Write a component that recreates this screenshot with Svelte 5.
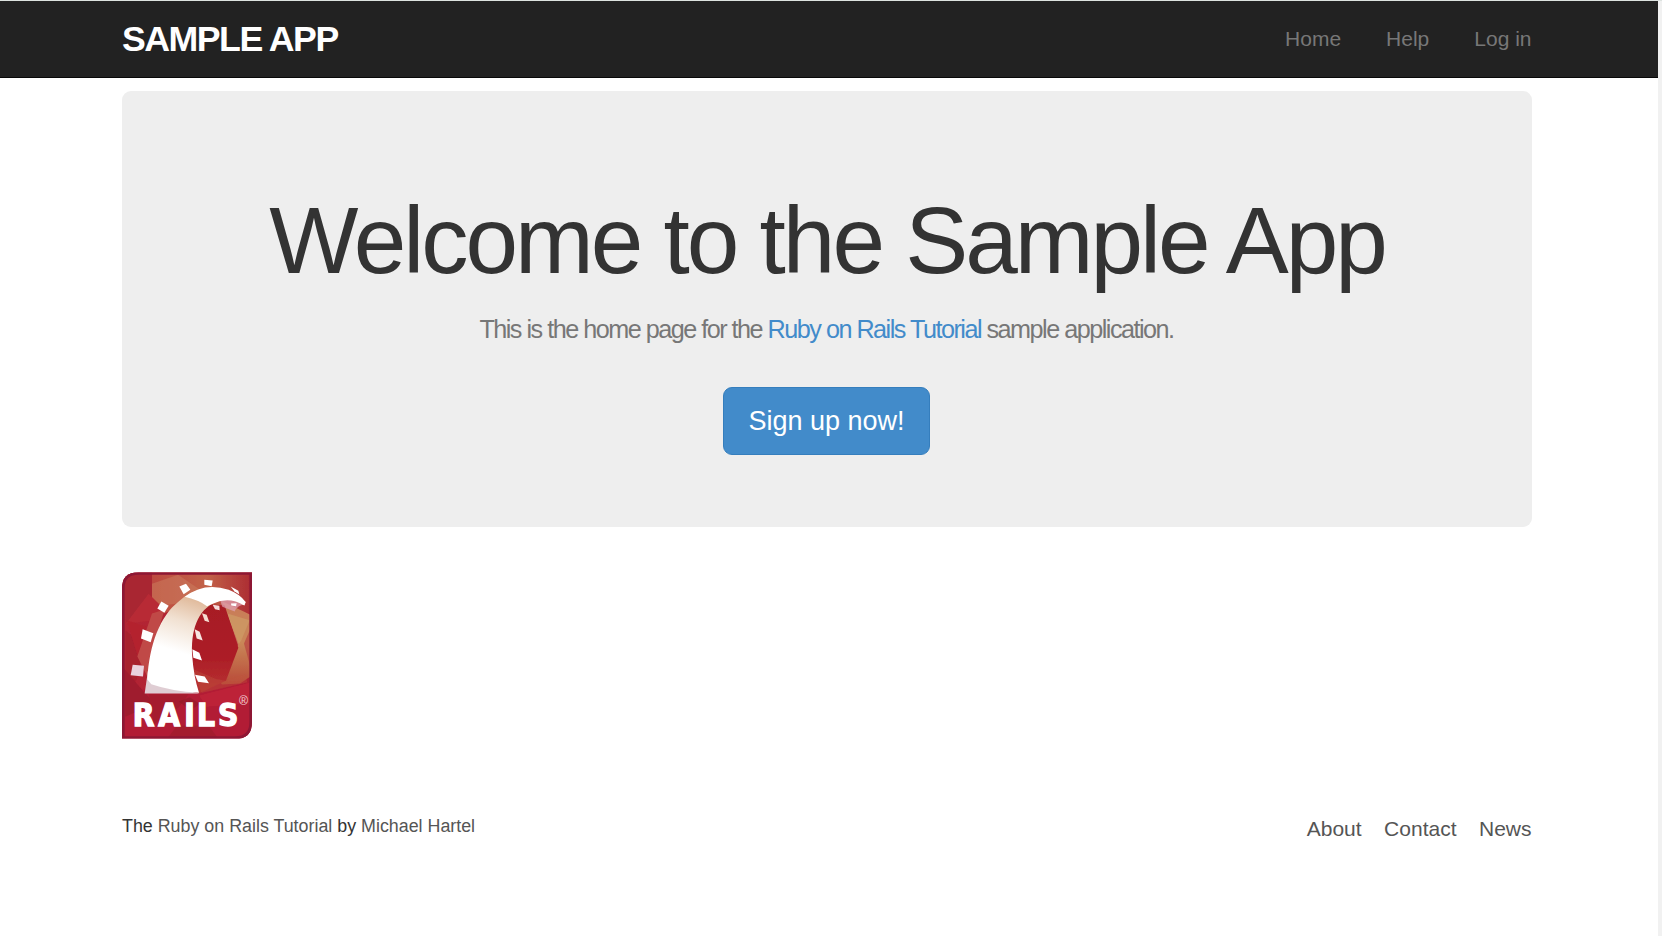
<script>
  const navLinks = ['Home', 'Help', 'Log in'];
  const footerLinks = ['About', 'Contact', 'News'];
</script>

<div class="window">
  <div class="page">
    <header>
      <div class="container bar">
        <a class="brand" href="#home">sample app</a>
        <nav class="top">
          {#each navLinks as label}<a href="#nav">{label}</a>{/each}
        </nav>
      </div>
    </header>

    <main class="container">
      <section class="hero">
        <h1>Welcome to the Sample App</h1>
        <p>This is the home page for the <a href="#tutorial">Ruby on Rails Tutorial</a> sample application.</p>
        <a class="button" href="#signup">Sign up now!</a>
      </section>

      <svg class="logo" viewBox="30 30 390 500" role="img" aria-label="Rails logo">
        <defs>
          <linearGradient id="base" x1="0" y1="0" x2="1" y2="1">
            <stop offset="0" stop-color="#b32634" />
            <stop offset="1" stop-color="#b01f33" />
          </linearGradient>
          <linearGradient id="track" gradientUnits="userSpaceOnUse" x1="235" y1="105" x2="185" y2="265">
            <stop offset="0" stop-color="#e0b99a" />
            <stop offset=".45" stop-color="#f1e1d2" />
            <stop offset="1" stop-color="#fff" />
          </linearGradient>
          <linearGradient id="gold" x1="0" y1="0" x2="0" y2="1">
            <stop offset="0" stop-color="#c97a58" />
            <stop offset=".5" stop-color="#c98758" />
            <stop offset="1" stop-color="#b94a38" />
          </linearGradient>
          <linearGradient id="glow" x1="0" y1="0" x2="1" y2="0">
            <stop offset="0" stop-color="#bd4a40" />
            <stop offset=".55" stop-color="#c26248" />
            <stop offset="1" stop-color="#ac2b32" />
          </linearGradient>
          <linearGradient id="core" x1="0" y1="0" x2="0" y2="1">
            <stop offset="0" stop-color="#a71a24" />
            <stop offset=".6" stop-color="#ac1d27" />
            <stop offset="1" stop-color="#b93432" />
          </linearGradient>
          <filter id="soft"><feGaussianBlur stdDeviation="2.2" /></filter>
          <clipPath id="frame"><path d="M30 78Q30 30 80 30H420V480Q420 530 370 530H30Z" /></clipPath>
        </defs>
        <g clip-path="url(#frame)">
          <path fill="url(#base)" d="M30 30h390v500H30z" />
          <g filter="url(#soft)">
            <path fill="#a92733" d="M30 30h90v98l-78 55z" />
            <path fill="url(#glow)" d="M120 30h300v125l-58-10-144-22-60 30-38-20z" />
            <path fill="#cc8060" opacity=".5" d="M120 65l78-27 62 42-60 43-80 12z" />
            <path fill="#b82b35" d="M110 95l48 47-40 34-76 8z" />
            <path fill="#a8202f" d="M40 205l57 42-22 102-35 61z" />
            <path fill="#b4222f" d="M44 174l60 20-26 90z" />
            <path fill="#c04a46" d="M120 154l38-12-34 109-18 92-30-60z" />
            <path fill="url(#gold)" d="M330 117l84 40v187l-30 20-54 3-15-20 65-102z" />
            <path fill="#cf9d66" opacity=".7" d="M346 154l67 20-25 60-10 15z" />
            <path fill="#b5303a" opacity=".55" d="M396 244l22-50v130z" />
            <path fill="url(#core)" d="M255 123l83 7 41 127-37 99-83 38-24-130z" />
            <path fill="#c0573f" opacity=".35" d="M241 320l69 30 30 6 60-20 8 35-139 22z" />
            <path fill="#b21f35" d="M36 404l84-34 140 24 153-35v165H36z" />
            <path fill="#9f1b2d" d="M36 320l64 74 30 30-90 40z" />
            <path fill="#a51b2e" d="M110 396h120l-30 40-75 50z" />
            <path fill="#901a2a" opacity=".6" d="M200 418l33-13 30 20-27 20z" />
            <path fill="#bd2238" d="M262 400l151-38v60l-130 12z" />
            <path fill="#921629" opacity=".45" d="M195 490h95l25 34H170z" />
            <path fill="#dfa0b0" opacity=".75" d="M322 108q45-10 76 20-20-1-30 20l-37-14z" />
          </g>
          <path fill="#dfcdd3" d="M108 325L98 394h165l-75-16z" />
          <path fill="url(#track)" d="M106 352C112 246 144 162 200 118Q235 86 278 79Q345 70 401 119L397 129Q344 101 310 120C257 143 235 205 241 285Q245 341 261 392Q179 387 118 366Z" />
          <path fill="#fff" d="M218 104Q278 58 350 83Q384 96 401 120L397 130Q352 102 304 124L285 132Q258 113 218 104Z" />
          <g fill="#fff">
            <path d="M202 73l20-8 13 18-20 13z" />
            <path d="M277 53l25 2-3 17-22-4z" />
            <path d="M356 73l23 13 3 11-15-10z" />
            <path d="M148 118l22 13-13 21-21-13z" />
            <path d="M92 201l32 12-8 27-29-11z" />
            <path fill="#ead2de" d="M62 308l34 3-3 32-37-4z" />
            <path d="M357 124l17-1-2 9-14-2z" />
            <path fill="#f6dcda" d="M302 128l20 3 1 13-14-3z" />
            <path fill="#f5ddd2" d="M270 153l14 5 8 22-14-4z" />
            <path fill="#f7e6e2" d="M248 201l15 8 9 26-18-6z" />
            <path d="M241 261l21 11 8 23-26-8z" />
            <path d="M249 338l29 5 13 20-33-4z" />
          </g>
          <g fill="#fff" stroke="#fff">
            <text class="word" x="62 139 217 255 318" y="493" font-size="94" stroke-width="4">RAILS</text>
            <text x="381" y="429" font-size="37" stroke="none" fill="#f0d5d9" font-family="'Liberation Sans', Arial, sans-serif">®</text>
          </g>
          <path fill="none" stroke="#8d1734" stroke-width="16" d="M30 78Q30 30 80 30H420V480Q420 530 370 530H30Z" />
        </g>
      </svg>

      <footer>
        <small>The <a href="#tutorial">Ruby on Rails Tutorial</a> by <a href="#author">Michael Hartel</a></small>
        <nav>
          {#each footerLinks as label}<a href="#footer">{label}</a>{/each}
        </nav>
      </footer>
    </main>
  </div>
  <div class="scroll"></div>
</div>

<style>
  :global(body) { margin: 0; overflow: hidden; }
  * { box-sizing: border-box; }
  .window { display: flex; height: 936px; border-top: 1px solid #dde3e0; background: #fff; color: #333; font: 21px/30px "Liberation Sans", Arial, sans-serif; }
  .page { flex: 1; }
  .scroll { width: 4px; background: #f1f1f1; }
  a { text-decoration: none; }
  header { height: 77px; background: #222; border-bottom: 1px solid #080808; }
  .container { width: 1410px; margin-left: 122px; }
  .bar { display: flex; justify-content: space-between; height: 76px; }
  .brand { padding-top: 2px; color: #fff; font-size: 35.7px; line-height: 73px; font-weight: 700; letter-spacing: -1.5px; text-transform: uppercase; }
  .top { display: flex; gap: 45px; padding-right: .5px; line-height: 75px; }
  .top a { color: #777; }
  .hero { display: flex; flex-direction: column; align-items: center; height: 436px; margin-top: 13px; padding: 102px 1px 0 0; border-radius: 9px; background: #eee; }
  h1 { margin: 0 0 22px 1px; font-size: 94.5px; line-height: 95px; font-weight: 400; letter-spacing: -3px; white-space: nowrap; }
  p { margin: 0 0 39px; color: #777; font-size: 25.2px; line-height: 38px; letter-spacing: -1.5px; white-space: nowrap; }
  p a { color: #428bca; }
  .button { width: 207px; height: 68px; border: 1px solid #357ebd; border-radius: 9px; background: #428bca; color: #fff; font-size: 27px; line-height: 66px; text-align: center; }
  .logo { display: block; width: 130px; height: 167px; margin-top: 45px; }
  .word { font-family: "DejaVu Sans", sans-serif; font-weight: 700; font-stretch: condensed; }
  footer { display: flex; justify-content: space-between; margin-top: 72px; padding-right: .5px; }
  small { font-size: 17.85px; line-height: 30px; }
  footer a { color: #555; }
  footer nav { display: flex; gap: 22.5px; padding-top: 3px; }
</style>
